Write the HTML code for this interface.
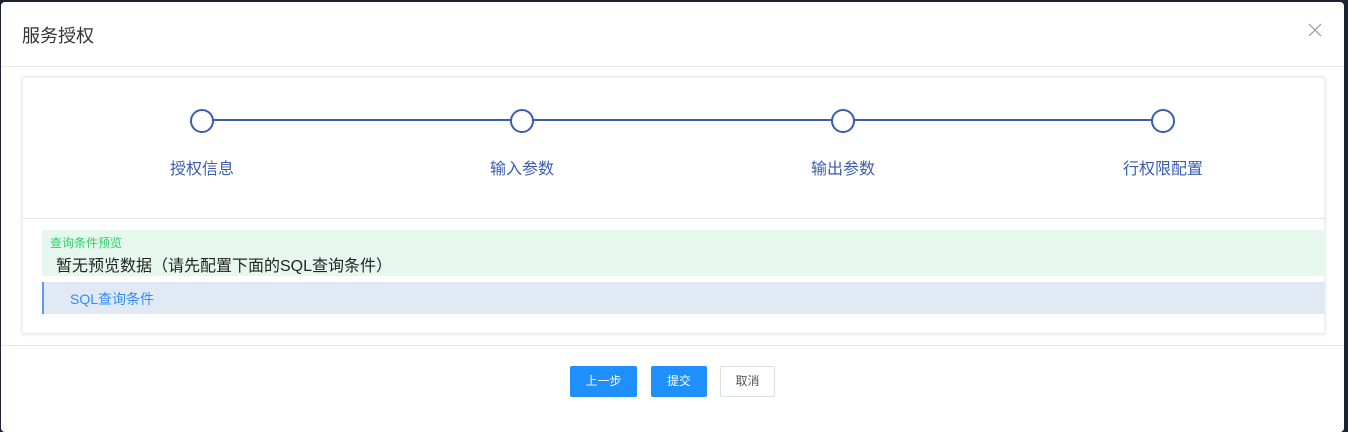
<!DOCTYPE html>
<html><head><meta charset="utf-8"><style>
body{margin:0;width:1348px;height:417px;background:#1c2330;position:relative;overflow:hidden;font-family:"Liberation Sans","Noto Sans CJK SC",sans-serif}
.dlg{position:absolute;left:1px;top:2px;width:1343px;height:430px;background:#fff;border-radius:4px}
.title{position:absolute;left:21px;top:20px;font-size:18px;color:#333}
.hl{position:absolute;left:0;width:1343px;height:1px;background:#e8e8e8}
.card{position:absolute;left:21px;top:75px;width:1303px;height:257px;background:#fff;box-shadow:0 0 4px rgba(0,0,0,.12);border:1px solid #eee;box-sizing:border-box}
.line{position:absolute;top:117px;height:2px;background:#3a5db0}
.c{position:absolute;top:107px;width:20px;height:20px;border:2px solid #3a5db0;border-radius:50%;background:#fff}
.lb{position:absolute;top:153px;font-size:16px;color:#3a5db0;width:120px;text-align:center}
.btn{position:absolute;top:364px;height:31px;border-radius:2px;font-size:12px;line-height:31px;text-align:center;color:#fff;background:#1f8ffb}
</style></head><body>
<div class="dlg">
<div class="title">服务授权</div>
<svg style="position:absolute;left:1307px;top:21px" width="14" height="14"><path d="M1 1L13 13M13 1L1 13" stroke="#999" stroke-width="1.2"/></svg>
<div class="hl" style="top:64px"></div>
<div class="card"></div>
<div class="hl" style="left:21px;width:1303px;top:216px;background:#e4e4e4"></div>
<div class="line" style="left:211px;width:940px"></div>
<div class="c" style="left:189px"></div><div class="c" style="left:509px"></div><div class="c" style="left:830px"></div><div class="c" style="left:1150px"></div>
<div class="lb" style="left:141px">授权信息</div>
<div class="lb" style="left:461px">输入参数</div>
<div class="lb" style="left:782px">输出参数</div>
<div class="lb" style="left:1102px">行权限配置</div>
<div style="position:absolute;left:41px;top:228px;width:1283px;height:46px;background:#e6f8ee"></div>
<div style="position:absolute;left:49px;top:232px;font-size:12px;color:#2fcf6a">查询条件预览</div>
<div style="position:absolute;left:55px;top:250px;font-size:16px;color:#222">暂无预览数据（请先配置下面的SQL查询条件）</div>
<div style="position:absolute;left:41px;top:280px;width:1281px;height:32px;background:#e1e9f5;border-left:2px solid #5a9cf8"></div>
<div style="position:absolute;left:69px;top:287px;font-size:14px;color:#2e8ef8">SQL查询条件</div>
<div class="hl" style="top:343px"></div>
<div class="btn" style="left:569px;width:67px">上一步</div>
<div class="btn" style="left:650px;width:56px">提交</div>
<div class="btn" style="left:719px;width:55px;background:#fff;color:#555;border:1px solid #dcdfe6;box-sizing:border-box;line-height:29px">取消</div>
</div>
</body></html>
